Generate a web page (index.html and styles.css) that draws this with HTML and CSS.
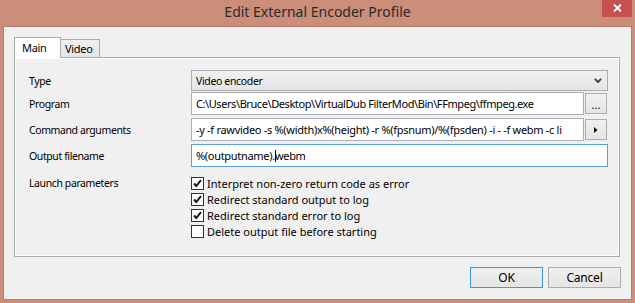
FILE: index.html
```html
<!DOCTYPE html>
<html lang="en">
<head>
  <meta charset="UTF-8" />
  <meta name="viewport" content="width=device-width, initial-scale=1.0"/>
  <title>Edit External Encoder Profile</title>
  <link rel="stylesheet" href="styles.css">
</head>
<body>
  <div class="window">
    <div class="titlebar">
      <span></span>
      <div class="title">Edit External Encoder Profile</div>
      <div class="close">
        <svg width="9" height="8" viewBox="0 0 9 8">
          <path d="M1 0.5 L8 7.5 M8 0.5 L1 7.5" stroke="#fff" stroke-width="1.8" fill="none"/>
        </svg>
      </div>
    </div>

    <div class="client">
      <div class="tabs">
        <div class="tab active">Main</div>
        <div class="tab">Video</div>
      </div>

      <div class="panel">
        <div class="form">
          <div class="label label-combo">Type</div>
          <div class="combo">
            <span>Video encoder</span>
            <svg width="8" height="5" viewBox="0 0 8 5">
              <path d="M0.8 0.8 L4 4 L7.2 0.8" stroke="#444" stroke-width="1.9" fill="none"/>
            </svg>
          </div>

          <div class="label">Program</div>
          <div class="field-row">
            <div class="input path">C:\Users\Bruce\Desktop\VirtualDub FilterMod\Bin\FFmpeg\ffmpeg.exe</div>
            <div class="small-btn dots">...</div>
          </div>

          <div class="label">Command arguments</div>
          <div class="field-row">
            <div class="input">-y -f rawvideo -s %(width)x%(height) -r %(fpsnum)/%(fpsden) -i - -f webm -c li</div>
            <div class="small-btn">
              <svg width="4" height="6" viewBox="0 0 4 6">
                <path d="M0 0 L3.5 3 L0 6 Z" fill="#000"/>
              </svg>
            </div>
          </div>

          <div class="label">Output filename</div>
          <div class="input focused">%(outputname).<span class="caret"></span>webm</div>

          <div class="label label-check">Launch parameters</div>
          <div class="checks">
            <div class="check">
              <span class="box">
                <svg width="11" height="11" viewBox="0 0 11 11">
                  <path d="M2 5.5 L4.3 8 L9 2.2" stroke="#1a1a1a" stroke-width="2" fill="none"/>
                </svg>
              </span>
              <span>Interpret non-zero return code as error</span>
            </div>
            <div class="check">
              <span class="box">
                <svg width="11" height="11" viewBox="0 0 11 11">
                  <path d="M2 5.5 L4.3 8 L9 2.2" stroke="#1a1a1a" stroke-width="2" fill="none"/>
                </svg>
              </span>
              <span>Redirect standard output to log</span>
            </div>
            <div class="check">
              <span class="box">
                <svg width="11" height="11" viewBox="0 0 11 11">
                  <path d="M2 5.5 L4.3 8 L9 2.2" stroke="#1a1a1a" stroke-width="2" fill="none"/>
                </svg>
              </span>
              <span>Redirect standard error to log</span>
            </div>
            <div class="check">
              <span class="box"></span>
              <span>Delete output file before starting</span>
            </div>
          </div>
        </div>
      </div>

      <div class="footer">
        <button class="btn default">OK</button>
        <button class="btn">Cancel</button>
      </div>
    </div>
  </div>
</body>
</html>
```

FILE: styles.css
```css
* {
  margin: 0;
  padding: 0;
  box-sizing: border-box;
}
body {
  font-family: 'Noto Sans', 'Open Sans', sans-serif;
  font-size: 11px;
  letter-spacing: -0.3px;
  color: #000;
  background: #ca8e7b;
}
.window {
  width: 635px;
  height: 303px;
  display: flex;
  flex-direction: column;
  padding: 0 3px 3px 3px;
  background: #ca8e7b;
  overflow: hidden;
}
.titlebar {
  height: 26px;
  display: grid;
  grid-template-columns: 1fr auto 1fr;
  align-items: start;
}
.title {
  font-size: 14px;
  letter-spacing: 0;
  line-height: 24px;
  color: #2b2b2b;
}
.close {
  justify-self: end;
  width: 30px;
  height: 17px;
  background: #c75050;
  display: flex;
  align-items: center;
  justify-content: center;
  padding-bottom: 2px;
}
.client {
  flex: 1;
  min-width: 0;
  background: #f0f0f0;
  border: 1px solid #b57d6b;
  padding: 10px 10px 11px 10px;
  display: flex;
  flex-direction: column;
}

/* tabs */
.tabs {
  display: flex;
  align-items: flex-start;
  height: 21px;
  margin-bottom: -1px;
  z-index: 1;
}
.tab {
  height: 18px;
  margin-top: 2px;
  margin-left: -1px;
  padding: 0 6px 0 4px;
  border: 1px solid #acacac;
  border-bottom: none;
  background: linear-gradient(#f0f0f0, #e5e5e5);
  line-height: 17px;
  color: #000;
}
.tab.active {
  height: 21px;
  margin-top: 0;
  margin-left: 0;
  width: 47px;
  padding: 0 0 0 7px;
  background: #fff;
  line-height: 20px;
}
.panel {
  height: 200px;
  margin-right: 1px;
  border: 1px solid #acacac;
  box-shadow: inset 0 0 0 1px #fff;
  background: #f0f0f0;
  padding: 12px 11px 0 14px;
}

/* form */
.form {
  display: grid;
  grid-template-columns: 162px minmax(0, 1fr);
  grid-template-rows: 22px 26px 26px 33px auto;
  align-items: start;
}
.label {
  font-size: 10.5px;
  letter-spacing: -0.4px;
  line-height: 23px;
  padding-top: 1px;
  white-space: nowrap;
}
.label-combo {
  line-height: 21px;
}
.label-check {
  line-height: 13px;
  padding-top: 0;
}
.combo {
  height: 21px;
  border: 1px solid #acacac;
  background: linear-gradient(#f0f0f0, #e5e5e5);
  display: flex;
  align-items: center;
  justify-content: space-between;
  padding: 0 5px 0 4px;
  font-size: 10.5px;
  letter-spacing: -0.35px;
}
.field-row {
  display: flex;
  gap: 1px;
  min-width: 0;
}
.input {
  flex: 1;
  min-width: 0;
  height: 23px;
  border: 1px solid #abadb3;
  background: #fff;
  padding: 0 4px;
  line-height: 21px;
  white-space: nowrap;
  overflow: hidden;
}
.input.path {
  letter-spacing: -0.42px;
}
.input.focused {
  border-color: #569de5;
}
.caret {
  display: inline-block;
  width: 1px;
  height: 12px;
  margin-right: -1px;
  vertical-align: -2px;
  background: #000;
}
.small-btn {
  flex: none;
  width: 22px;
  height: 21px;
  margin-top: 1px;
  margin-right: 1px;
  border: 1px solid #acacac;
  background: linear-gradient(#f0f0f0, #e5e5e5);
  display: flex;
  align-items: center;
  justify-content: center;
}
.small-btn.dots {
  align-items: flex-end;
  line-height: 17px;
  letter-spacing: 0;
}

/* checkboxes */
.checks {
  display: flex;
  flex-direction: column;
}
.check {
  height: 16px;
  display: flex;
  align-items: flex-start;
  gap: 3px;
  font-size: 11px;
  letter-spacing: 0;
  line-height: 13px;
}
.box {
  flex: none;
  width: 13px;
  height: 13px;
  border: 1px solid #333;
  background: #fff;
  display: flex;
  align-items: center;
  justify-content: center;
}

/* footer buttons */
.footer {
  margin-top: 10px;
  display: flex;
  justify-content: flex-end;
  gap: 5px;
}
.btn {
  width: 73px;
  height: 21px;
  border: 1px solid #acacac;
  background: linear-gradient(#f0f0f0, #e5e5e5);
  font-family: inherit;
  font-size: 12px;
  letter-spacing: -0.2px;
  color: #000;
}
.btn.default {
  border-color: #3c97e8;
}
```
